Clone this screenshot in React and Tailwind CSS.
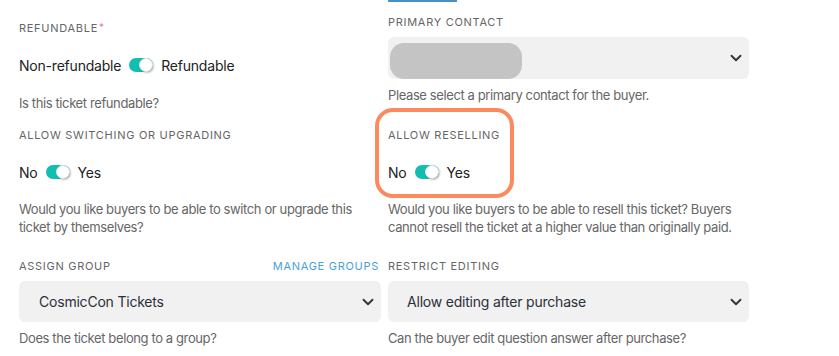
import React from 'react';
import { ChevronDown } from 'lucide-react';

const Label = ({ children, className = '' }) => (
  <div className={`text-[11px] leading-4 tracking-[0.065em] text-[#666] uppercase ${className}`}>
    {children}
  </div>
);

const Help = ({ children, className = '' }) => (
  <p className={`text-[13px] leading-[18px] text-[#666] tracking-[-0.03em] ${className}`}>{children}</p>
);

const Toggle = ({ left, right }) => (
  <div className="flex items-center h-5 text-[14px] text-[#222] tracking-[-0.015em]">
    <span>{left}</span>
    <span className="relative mx-2 inline-flex items-center w-6 h-[14px] rounded-full bg-[#12beb2]">
      <span className="absolute right-0 w-[14px] h-[14px] rounded-full bg-white border border-[#e5e5e5] shadow-[1px_1px_2px_rgba(0,0,0,0.25)]" />
    </span>
    <span>{right}</span>
  </div>
);

const Select = ({ children, className = '' }) => (
  <div className={`flex items-center justify-between rounded-md bg-[#f1f1f1] ${className}`}>
    <div className="flex items-center h-full">{children}</div>
    <ChevronDown size={18} strokeWidth={2.5} className="mr-[4px] text-[#333]" />
  </div>
);

export default function App() {
  return (
    <div className="w-[839px] h-[356px] bg-white overflow-hidden font-['Inter',sans-serif]">
      <div className="grid grid-cols-[362px_361px] grid-rows-[118px_134px_auto] gap-x-[7px] pl-[19px]">
        {/* Row 1 */}
        <div>
          <Label className="mt-[20px]">
            Refundable<sup className="text-[#f47c7c] text-[10px] ml-[1px] relative -top-[1px]">*</sup>
          </Label>
          <div className="mt-[19px]">
            <Toggle left="Non-refundable" right="Refundable" />
          </div>
          <Help className="mt-[19px]">Is this ticket refundable?</Help>
        </div>
        <div>
          <div className="h-[2px] w-[69px] bg-[#4a90c8]" />
          <Label className="mt-[12px]">Primary Contact</Label>
          <Select className="mt-[7px] h-[42px] pl-[2px]">
            <div className="w-[132px] h-[36px] mt-[6px] rounded-[14px] bg-[#c4c4c4]" />
          </Select>
          <Help className="mt-[7px]">Please select a primary contact for the buyer.</Help>
        </div>

        {/* Row 2 */}
        <div className="pt-[9px]">
          <Label>Allow switching or upgrading</Label>
          <div className="mt-[19px]">
            <Toggle left="No" right="Yes" />
          </div>
          <Help className="mt-[18px]">
            Would you like buyers to be able to switch or upgrade this ticket by themselves?
          </Help>
        </div>
        <div className="relative pt-[9px]">
          {/* highlight box */}
          <div className="absolute -left-[13px] -top-[10px] w-[139px] h-[90px] rounded-[18px] border-4 border-[#fd8a5e]" />
          <Label>Allow reselling</Label>
          <div className="mt-[19px]">
            <Toggle left="No" right="Yes" />
          </div>
          <Help className="mt-[18px]">
            Would you like buyers to be able to resell this ticket? Buyers cannot resell the ticket at a higher value than originally paid.
          </Help>
        </div>

        {/* Row 3 */}
        <div className="pt-[6px]">
          <div className="flex items-center justify-between">
            <Label>Assign Group</Label>
            <span className="text-[11px] leading-4 tracking-[0.065em] text-[#4a9fd8] uppercase mr-[2px]">Manage Groups</span>
          </div>
          <Select className="mt-[7px] h-[41px] pl-[20px]">
            <span className="text-[14px] text-[#2b2f3a] tracking-[-0.015em]">CosmicCon Tickets</span>
          </Select>
          <Help className="mt-[7px]">Does the ticket belong to a group?</Help>
        </div>
        <div className="pt-[6px]">
          <Label>Restrict Editing</Label>
          <Select className="mt-[7px] h-[41px] pl-[19px]">
            <span className="text-[14px] text-[#2b2f3a] tracking-[-0.015em]">Allow editing after purchase</span>
          </Select>
          <Help className="mt-[7px]">Can the buyer edit question answer after purchase?</Help>
        </div>
      </div>
    </div>
  );
}
